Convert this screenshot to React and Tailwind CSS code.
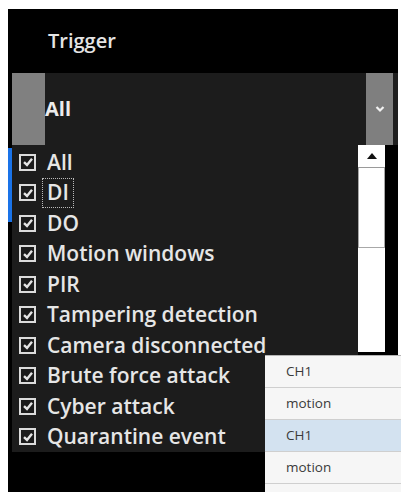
const items = [
  "All",
  "DI",
  "DO",
  "Motion windows",
  "PIR",
  "Tampering detection",
  "Camera disconnected",
  "Brute force attack",
  "Cyber attack",
  "Quarantine event",
];

const popupRows = [
  { label: "CH1", active: false },
  { label: "motion", active: false },
  { label: "CH1", active: true },
  { label: "motion", active: false },
  { label: "", active: false },
];

function CheckBox() {
  return (
    <span className="flex h-[17px] w-[17px] shrink-0 items-center justify-center border-2 border-[#dcdcdc] bg-[#1c1c1c]">
      <svg width="12" height="12" viewBox="0 0 12 12">
        <path d="M2 6.2 L5 9 L10 2.8" fill="none" stroke="#e6e6e6" strokeWidth="2.4" />
      </svg>
    </span>
  );
}

export default function App() {
  return (
    <div className="relative h-[492px] w-[401px] overflow-hidden bg-white pl-[8px] pt-[9px] font-['Open_Sans',sans-serif]">
      <div className="flex h-full w-[390px] flex-col bg-black">
        {/* header */}
        <div className="flex h-[64px] items-center pl-[40px] text-[20px] font-semibold text-[#e4e4e4]">
          Trigger
        </div>

        {/* select box */}
        <div className="flex h-[72px]">
          <div className="w-[4px]" />
          <div className="w-[33px] bg-[#808080]" />
          <div className="flex flex-1 items-center bg-[#1c1c1c] text-[20px] font-bold text-[#ececec]">
            All
          </div>
          <div className="flex w-[27px] items-center justify-center bg-[#7f7f7f]">
            <svg width="10" height="8" viewBox="0 0 10 8">
              <path d="M1.5 2 L5 5.5 L8.5 2" fill="none" stroke="#f2f2f2" strokeWidth="2.2" />
            </svg>
          </div>
          <div className="w-[5px] bg-[#1e1e1e]" />
        </div>

        {/* list */}
        <div className="flex">
          <div className="w-[4px] pt-[3px]">
            <div className="h-[74px] w-[4px] bg-[#1a73e8]" />
          </div>
          <div className="w-[346px] bg-[#1c1c1c] pt-[2px]">
            {items.map((item) => (
              <div key={item} className="flex h-[30.5px] items-center gap-[11px] pl-[7px] text-[21px] font-semibold text-[#e6e6e6]">
                <CheckBox />
                {item === "DI" ? (
                  <span className="-ml-[5px] flex h-[30px] items-center border border-dotted border-[#bbbbbb] px-[4px]">
                    {item}
                  </span>
                ) : (
                  <span className="whitespace-nowrap">{item}</span>
                )}
              </div>
            ))}
          </div>
          <div className="flex h-[207px] w-[27px] flex-col bg-white">
            <div className="flex h-[23px] items-center justify-center border-b border-[#9a9a9a]">
              <svg width="10" height="6" viewBox="0 0 10 6">
                <path d="M0 6 L5 0 L10 6 Z" fill="#111" />
              </svg>
            </div>
            <div className="h-[80px] border-x border-b border-[#a8a8a8] bg-white" />
          </div>
        </div>
      </div>

      {/* channel popup */}
      <div className="absolute left-[265px] top-[355px] w-[140px] border-t border-[#b5b5b5] bg-[#f6f6f6] text-[13.5px] text-[#3a3a3a]">
        {popupRows.map((row, i) => (
          <div
            key={i}
            className={`flex h-[32px] items-center border-b border-[#cfcfcf] pl-[21px] ${row.active ? "bg-[#d3e2f0]" : ""}`}
          >
            {row.label}
          </div>
        ))}
      </div>
    </div>
  );
}
